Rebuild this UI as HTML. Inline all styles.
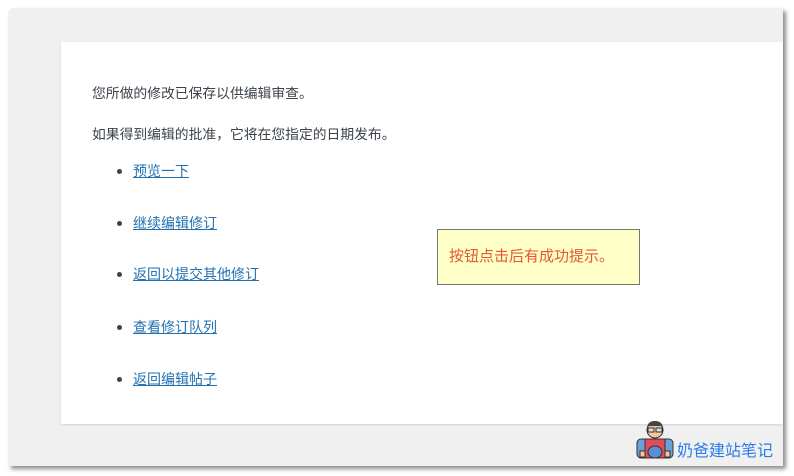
<!DOCTYPE html><html><head><meta charset="utf-8"><style>
body{margin:0;width:794px;height:476px;background:#fff;position:relative;overflow:hidden;font-family:"Liberation Sans","Noto Sans CJK SC",sans-serif;font-size:13.8px;color:#3c434a}
.panel{position:absolute;left:8px;top:8px;width:775px;height:458px;background:#f0f0f1;border-radius:6px 0 0 0;box-shadow:3px 3px 4px rgba(0,0,0,.45)}
.card{position:absolute;left:61px;top:42px;width:722px;height:382px;background:#fff;box-shadow:0 1px 2px rgba(0,0,0,.12)}
p{position:absolute;left:92px;margin:0;line-height:16px}
li{position:absolute;left:133px;list-style:none;line-height:16px;font-size:14px}
li::before{content:"";position:absolute;left:-16px;top:6px;width:5px;height:5px;border-radius:50%;background:#3c434a}
a{color:#2271b1;text-decoration:underline}
.tip{position:absolute;left:437px;top:229px;width:201px;height:54px;background:#ffffc8;border:1px solid #777;color:#e8553a;font-size:15px;line-height:54px;box-sizing:content-box}
.tip span{margin-left:11px}
.logo{position:absolute;left:677px;top:437px;color:#2b7ce9;font-size:16px}
</style></head><body>
<div class="panel"></div><div class="card"></div>
<p style="top:86px">您所做的修改已保存以供编辑审查。</p>
<p style="top:127px">如果得到编辑的批准，它将在您指定的日期发布。</p>
<ul style="margin:0;padding:0">
<li style="top:163px"><a>预览一下</a></li>
<li style="top:215px"><a>继续编辑修订</a></li>
<li style="top:266px"><a>返回以提交其他修订</a></li>
<li style="top:319px"><a>查看修订队列</a></li>
<li style="top:371px"><a>返回编辑帖子</a></li>
</ul>
<div class="tip"><span>按钮点击后有成功提示。</span></div>
<svg style="position:absolute;left:636px;top:419px" width="38" height="40" viewBox="0 0 38 40">
<rect x="1" y="20" width="36" height="19" rx="4" fill="#6ca0d8" stroke="#333"/>
<rect x="9" y="20" width="20" height="19" fill="#e24b5b" stroke="#333"/>
<ellipse cx="19" cy="33" rx="7" ry="6" fill="#5b8fd0" stroke="#333"/>
<circle cx="19" cy="11" r="8" fill="#f3c6a0" stroke="#333"/>
<path d="M11 10 Q11 2 19 2 Q27 2 27 10 L25 7 L13 7Z" fill="#444"/>
<rect x="12" y="9" width="6" height="4" fill="#ddd" stroke="#333"/><rect x="20" y="9" width="6" height="4" fill="#ddd" stroke="#333"/>
<rect x="4" y="32" width="5" height="6" fill="#f3c6a0" stroke="#333"/><rect x="29" y="32" width="5" height="6" fill="#f3c6a0" stroke="#333"/>
</svg>
<div class="logo">奶爸建站笔记</div>
</body></html>
